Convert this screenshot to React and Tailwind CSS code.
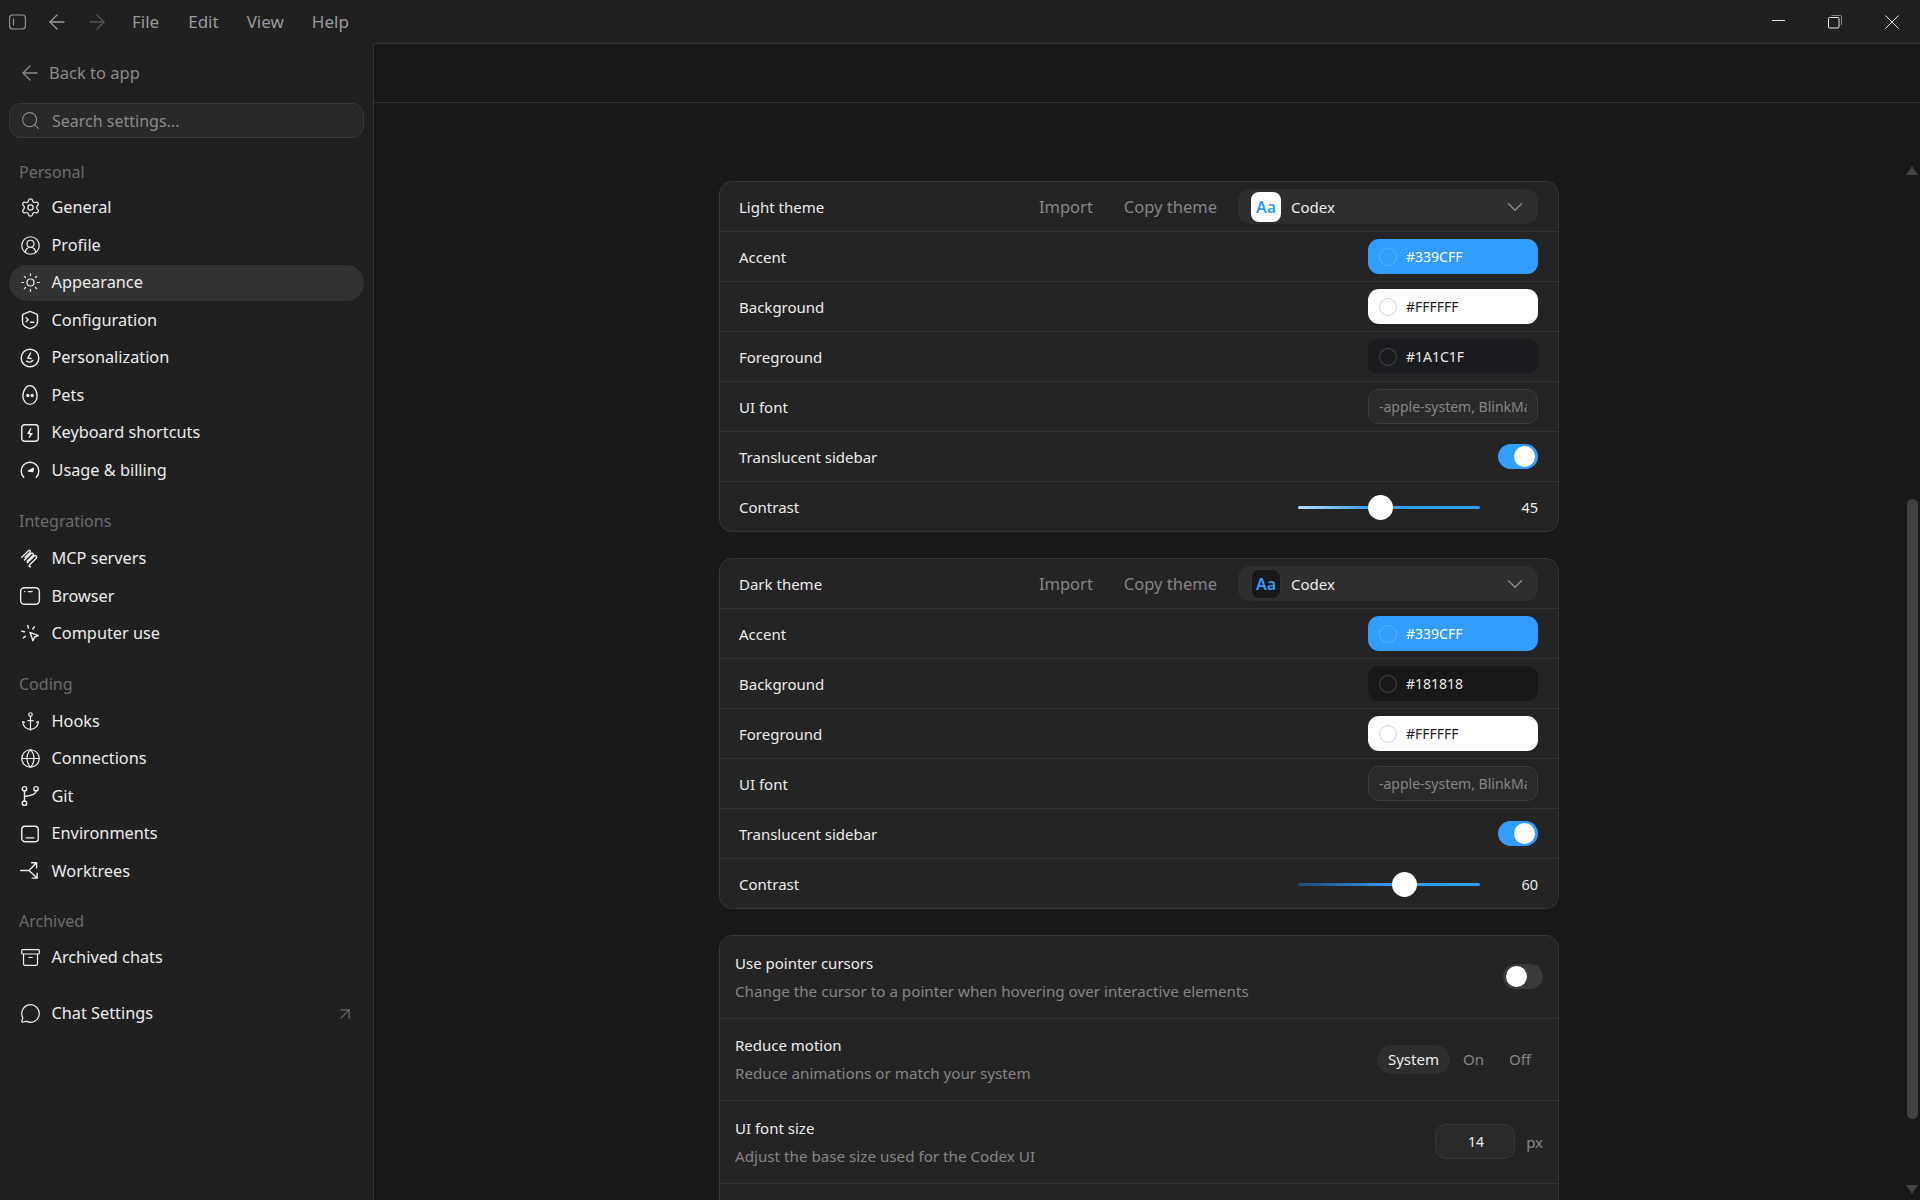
import { ArrowLeft, ArrowRight, ArrowUpRight, Anchor, Archive, ChevronDown, CircleUserRound, Globe, MessageCircle, Search, Settings, Sun } from "lucide-react";

const Ico = ({ children }) => (
  <svg width="22" height="22" viewBox="0 0 20 20" fill="none" stroke="currentColor" strokeWidth="1.3" strokeLinecap="round" strokeLinejoin="round">
    {children}
  </svg>
);

// icons that lucide has no close match for
const ConfigIcon = () => (
  <Ico>
    <path d="M10 2.200l6 2.400c.5.2.8.7.8 1.200v6c0 3-3 5-6.800 6-3.800-1-6.800-3-6.800-6v-6c0-.5.300-1 .8-1.200z" />
    <path d="M6.500 8l2 1.800-2 1.800M10.500 12h3" />
  </Ico>
);
const PersonalizeIcon = () => (
  <Ico>
    <circle cx="10" cy="10" r="8" />
    <path d="M10.500 5.500l-2.500 4.500 3 .5M7 12.800c1.500 1.200 4 1.200 5.500-.5" />
  </Ico>
);
const PetsIcon = () => (
  <Ico>
    <path d="M10 1.500c3.600 0 6.500 4.500 6.500 9.500 0 4-2.900 7.500-6.500 7.500s-6.500-3.500-6.500-7.500c0-5 2.900-9.500 6.500-9.500z" />
    <circle cx="8" cy="10.500" r=".9" fill="currentColor" />
    <circle cx="12" cy="10.500" r=".9" fill="currentColor" />
  </Ico>
);
const ShortcutIcon = () => (
  <Ico>
    <rect x="2.500" y="2.500" width="15" height="15" rx="2.500" />
    <path d="M10.800 6l-2.800 4.500h4l-2.800 3.500" fill="currentColor" strokeWidth="1" />
  </Ico>
);
const UsageIcon = () => (
  <Ico>
    <path d="M4.300 16.500A8 8 0 1 1 15.700 16.500" />
    <path d="M8.500 11l4.500-2.500-.5 3z" fill="currentColor" />
  </Ico>
);
const McpIcon = () => (
  <Ico>
    <path d="M2.500 8.500l6-6c1-1 2.500 0 1.500 1.500l-4.500 4.500M5 11l6-6c1-1 3 .5 1.500 2l-5 5M7.500 13.500l6-6c1.500-1.500 3.500.5 2 2l-6 6c-.8.800 0 1.800 1 1.500" />
  </Ico>
);
const BrowserIcon = () => (
  <Ico>
    <rect x="1.500" y="2.500" width="17" height="15" rx="3.500" />
    <path d="M5.200 6h.2M8.500 6h3.500" />
  </Ico>
);
const ComputerIcon = () => (
  <Ico>
    <path d="M10 8.500l7.500 3-3.300 1.200-1.500 3.500z" />
    <path d="M8 2.200l.5 2.500M14 3.500l-1.500 2M2.500 7.500l2.500.5M4 13.500l1.800-1.500" />
  </Ico>
);
const GitIcon = () => (
  <Ico>
    <circle cx="5" cy="3.500" r="2" />
    <circle cx="15.500" cy="3.500" r="2" />
    <circle cx="5" cy="16.500" r="2" />
    <path d="M5 5.500v9M15.500 5.500c0 3.500-5.500 4.500-10.500 5" />
  </Ico>
);
const EnvIcon = () => (
  <Ico>
    <rect x="2.500" y="3" width="15" height="14" rx="3" />
    <path d="M6.500 13.500h7" />
  </Ico>
);
const WorktreeIcon = () => (
  <Ico>
    <path d="M1.500 9.500H9l6.500-6.500M11.500 2.500h4.500v4.500M9 9.500l7 6.500M16.500 12v4.500H12" />
  </Ico>
);

const L = 21;
const groups = [
  {
    title: "Personal",
    top: "mt-[22px]",
    gap: "mb-[4px]",
    items: [
      ["General", <Settings size={L} strokeWidth={1.4} />],
      ["Profile", <CircleUserRound size={L} strokeWidth={1.4} />],
      ["Appearance", <Sun size={L} strokeWidth={1.4} />, true],
      ["Configuration", <ConfigIcon />],
      ["Personalization", <PersonalizeIcon />],
      ["Pets", <PetsIcon />],
      ["Keyboard shortcuts", <ShortcutIcon />],
      ["Usage & billing", <UsageIcon />],
    ],
  },
  {
    title: "Integrations",
    top: "mt-[21px]",
    gap: "mb-[6px]",
    items: [
      ["MCP servers", <McpIcon />],
      ["Browser", <BrowserIcon />],
      ["Computer use", <ComputerIcon />],
    ],
  },
  {
    title: "Coding",
    top: "mt-[20px]",
    gap: "mb-[6px]",
    items: [
      ["Hooks", <Anchor size={L} strokeWidth={1.4} />],
      ["Connections", <Globe size={L} strokeWidth={1.4} />],
      ["Git", <GitIcon />],
      ["Environments", <EnvIcon />],
      ["Worktrees", <WorktreeIcon />],
    ],
  },
  {
    title: "Archived",
    top: "mt-[20px]",
    gap: "mb-[5px]",
    items: [["Archived chats", <Archive size={L} strokeWidth={1.4} />]],
  },
];

function NavItem({ label, icon, active }) {
  return (
    <div className={`flex h-9 items-center gap-[10.500px] rounded-full pl-[10px] pr-3 text-[16.300px] text-[#ececec] ${active ? "bg-[#323232]" : ""}`}>
      <span className="flex w-[22px] justify-center">{icon}</span>
      <span>{label}</span>
    </div>
  );
}

function Sidebar() {
  return (
    <aside className="flex w-[373px] shrink-0 flex-col px-[9px] pt-3">
      <div className="flex h-9 items-center gap-[7px] pl-[9px] text-[16.500px] text-[#8a8a8a]">
        <ArrowLeft size={24} strokeWidth={1.3} />
        <span>Back to app</span>
      </div>
      <div className="mt-3 flex h-[35px] items-center gap-[11px] rounded-[12px] border border-[#383838] bg-[#292929] pl-[10px] text-[16px] text-[#8a8a8a]">
        <Search size={21} strokeWidth={1.3} />
        <span>Search settings...</span>
      </div>
      {groups.map((g) => (
        <div key={g.title} className={`flex flex-col gap-[1.500px] ${g.top}`}>
          <div className={`flex h-[24px] items-center pl-[10px] text-[16px] text-[#6b6b6b] ${g.gap}`}>{g.title}</div>
          {g.items.map((it) => (
            <NavItem key={it[0]} label={it[0]} icon={it[1]} active={it[2]} />
          ))}
        </div>
      ))}
      <div className="mt-[20px] flex items-center justify-between pr-[9px]">
        <div className="grow">
          <NavItem label="Chat Settings" icon={<MessageCircle size={L} strokeWidth={1.4} />} />
        </div>
        <ArrowUpRight size={20} strokeWidth={1.5} className="text-[#666]" />
      </div>
    </aside>
  );
}

function TitleBar() {
  return (
    <div className="flex h-[43px] shrink-0 items-center text-[17px] text-[#9a9a9a]">
      <svg width="17" height="16" viewBox="0 0 17 16" fill="none" stroke="currentColor" strokeWidth="1.1" className="ml-[9px]">
        <rect x="0.600" y="1" width="15.800" height="14" rx="3" />
        <path d="M4.500 4.500v7" />
      </svg>
      <ArrowLeft size={24} strokeWidth={1.3} className="ml-[19px]" />
      <ArrowRight size={24} strokeWidth={1.3} className="ml-[16px] text-[#555]" />
      <span className="ml-[23px]">File</span>
      <span className="ml-[29px]">Edit</span>
      <span className="ml-[28px]">View</span>
      <span className="ml-[28px]">Help</span>
      <div className="ml-auto flex items-center text-[#e6e6e6]">
        <div className="mr-[43px] h-[1px] w-[13px] -translate-y-[1px] bg-[#e6e6e6]" />
        <svg width="14" height="14" viewBox="0 0 14 14" fill="none" stroke="currentColor" className="mr-[43px]">
          <rect x="0.500" y="2.500" width="10.500" height="10.500" rx="1" />
          <path d="M3.500 .5h8.500a1.500 1.500 0 0 1 1.500 1.500v8" stroke="#8a8a8a" />
        </svg>
        <svg width="14" height="14" viewBox="0 0 14 14" fill="none" stroke="currentColor" className="mr-[21px]">
          <path d="M.5 .5l13 13M13.500 .5l-13 13" />
        </svg>
      </div>
    </div>
  );
}

const Row = ({ children, last }) => (
  <div className={`flex items-center justify-between pl-[19px] pr-[20px] text-[15px] text-[#ececec] ${last ? "h-[49px]" : "h-[50px] border-b border-[#333]"}`}>
    {children}
  </div>
);

function ColorField({ value, bg, text, ring }) {
  return (
    <div className={`flex h-[35px] w-[170px] items-center gap-[9px] rounded-[11px] pl-[11px] text-[14px] ${bg} ${text}`}>
      <span className={`h-[18px] w-[18px] rounded-full border ${ring}`} />
      <span>{value}</span>
    </div>
  );
}

function Toggle({ on }) {
  return (
    <div className={`flex h-[25px] w-[40px] items-center rounded-full px-[3px] ${on ? "justify-end bg-[#339cff]" : "bg-[#3a3a3a]"}`}>
      <span className="h-[21px] w-[21px] rounded-full bg-white" />
    </div>
  );
}

function ThemeCard({ name, dark, colors, contrast, track }) {
  return (
    <div className="w-[840px] shrink-0 overflow-hidden rounded-[13px] border border-[#363636] bg-[#242424]">
      <Row>
        <span className="pt-[1px]">{name}</span>
        <div className="flex items-center text-[16.500px] text-[#858585]">
          <span className="pt-[2px]">Import</span>
          <span className="ml-[31px] pt-[2px]">Copy theme</span>
          <div className="ml-[21px] flex h-[35px] w-[300px] items-center rounded-[12px] bg-[#2e2e2e] pl-[13px] pr-[10px] text-[15px] text-[#ececec]">
            <span className={`flex h-[30px] w-[30px] items-center justify-center rounded-[8px] text-[16px] font-semibold ${dark ? "border border-[#333] bg-[#181818] text-[#339cff]" : "bg-white text-[#339cff]"}`}>
              Aa
            </span>
            <span className="ml-[10px] pt-[2px]">Codex</span>
            <ChevronDown size={26} strokeWidth={1.3} className="ml-auto text-[#8a8a8a]" />
          </div>
        </div>
      </Row>
      {colors.map((c) => (
        <Row key={c[0]}>
          <span className="pt-[1px]">{c[0]}</span>
          <ColorField value={c[1]} bg={c[2]} text={c[3]} ring={c[4]} />
        </Row>
      ))}
      <Row>
        <span className="pt-[1px]">UI font</span>
        <div className="h-[35px] w-[170px] rounded-[11px] border border-[#3c3c3c] bg-[#2a2a2a] px-[10px] text-[14px] leading-[33px] text-[#858585]">
          <div className="overflow-hidden whitespace-nowrap">-apple-system, BlinkMacSystemFont</div>
        </div>
      </Row>
      <Row>
        <span className="pt-[1px]">Translucent sidebar</span>
        <Toggle on />
      </Row>
      <Row last>
        <span className="pt-[2px]">Contrast</span>
        <div className="flex items-center pt-[1px]">
          <div className="flex w-[182px] items-center">
            <div className={`h-[3px] rounded-l-full ${track}`} style={{ width: contrast * 1.6 - 1 }} />
            <span className="z-10 -mx-[1px] h-[25px] w-[25px] shrink-0 rounded-full bg-white" />
            <div className="h-[3px] grow rounded-r-full bg-[#339cff]" />
          </div>
          <span className="w-[58px] pt-[2px] text-right text-[14.500px]">{contrast}</span>
        </div>
      </Row>
    </div>
  );
}

function PrefRow({ title, desc, children }) {
  return (
    <div className="flex h-[82.500px] items-center justify-between border-b border-[#333] pl-[15px] pr-[15px]">
      <div className="flex flex-col gap-[6px]">
        <span className="text-[15px] leading-[22px] text-[#ececec]">{title}</span>
        <span className="text-[15.200px] leading-[22px] text-[#858585]">{desc}</span>
      </div>
      {children}
    </div>
  );
}

const lightColors = [
  ["Accent", "#339CFF", "bg-[#339cff]", "text-white", "border-[#5cb0ff]"],
  ["Background", "#FFFFFF", "bg-white", "text-[#222]", "border-[#d4d4d4]"],
  ["Foreground", "#1A1C1F", "bg-[#1a1c1f]", "text-[#ececec]", "border-[#44464a]"],
];
const darkColors = [
  ["Accent", "#339CFF", "bg-[#339cff]", "text-white", "border-[#5cb0ff]"],
  ["Background", "#181818", "bg-[#181818]", "text-[#ececec]", "border-[#444]"],
  ["Foreground", "#FFFFFF", "bg-white", "text-[#222]", "border-[#d4d4d4]"],
];

export default function App() {
  return (
    <div className="flex h-screen flex-col overflow-hidden bg-[#202020] font-['Noto_Sans',sans-serif]">
      <TitleBar />
      <div className="flex min-h-0 grow">
        <Sidebar />
        <main className="flex min-w-0 grow flex-col border-l border-t border-[#333] bg-[#181818]">
          <div className="h-[59px] shrink-0 border-b border-[#2e2e2e]" />
          <div className="flex min-h-0 grow">
            <div className="flex min-w-0 grow flex-col items-center gap-[26px] overflow-hidden pt-[78px]">
              <ThemeCard name="Light theme" colors={lightColors} contrast={45} track="bg-gradient-to-r from-[#b5dcff] to-[#339cff]" />
              <ThemeCard name="Dark theme" dark colors={darkColors} contrast={60} track="bg-gradient-to-r from-[#1f4a73] to-[#339cff]" />
              <div className="w-[840px] shrink-0 rounded-t-[13px] border border-[#363636] bg-[#242424] pb-[40px]">
                <PrefRow title="Use pointer cursors" desc="Change the cursor to a pointer when hovering over interactive elements">
                  <Toggle />
                </PrefRow>
                <PrefRow title="Reduce motion" desc="Reduce animations or match your system">
                  <div className="flex items-center pr-[12px] text-[15px] text-[#858585]">
                    <span className="flex h-[29px] items-center rounded-full bg-[#2e2e2e] px-[11px] text-[#ececec]">System</span>
                    <span className="ml-[13px]">On</span>
                    <span className="ml-[25px]">Off</span>
                  </div>
                </PrefRow>
                <PrefRow title="UI font size" desc="Adjust the base size used for the Codex UI">
                  <div className="flex items-center gap-[11px] text-[15px] text-[#858585]">
                    <div className="flex h-[35px] w-[80px] items-center justify-end rounded-[11px] border border-[#383838] bg-[#2a2a2a] pr-[30px] text-[14px] text-[#ececec]">14</div>
                    <span>px</span>
                  </div>
                </PrefRow>
              </div>
            </div>
            <div className="flex w-[16px] shrink-0 flex-col items-center pt-[63px]">
              <div className="h-0 w-0 border-x-[6px] border-b-[9px] border-x-transparent border-b-[#444]" />
              <div className="mt-[324px] h-[620px] w-[11px] shrink-0 rounded-full bg-[#424242]" />
              <div className="mt-[66px] h-0 w-0 border-x-[6px] border-t-[9px] border-x-transparent border-t-[#444]" />
            </div>
          </div>
        </main>
      </div>
    </div>
  );
}
